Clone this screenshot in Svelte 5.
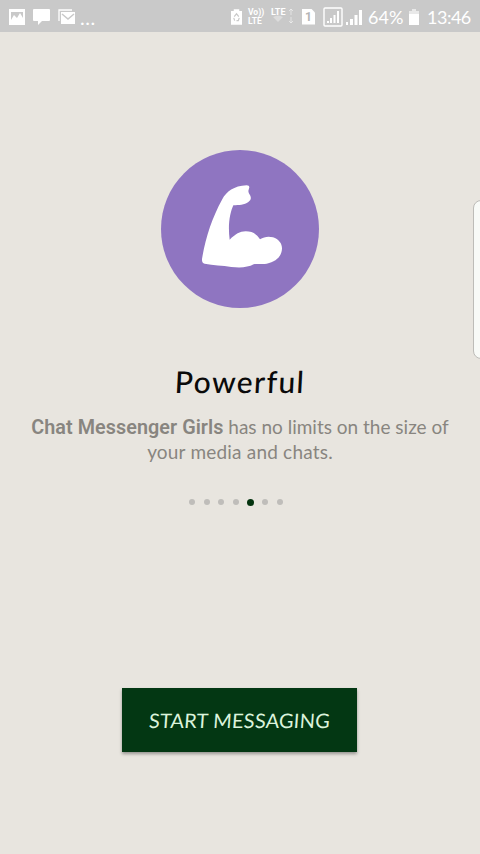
<script>
  const slides = 7;
  let current = 4;
</script>

<div class="screen">
  <header class="status">
    <div class="notifications">
      <svg width="16" height="16" viewBox="0 0 16 16">
        <path fill="#fff" fill-rule="evenodd" d="M0 0h16v16H0zM2 3v10h12V3zM2 11l3-5 3 3 3-5 3 5v4H2z" />
      </svg>
      <svg width="17" height="16" viewBox="0 0 17 16">
        <path fill="#fff" d="M1 0h15q1 0 1 1v10q0 1-1 1H9l-4 4v-4H1q-1 0-1-1V1q0-1 1-1z" />
      </svg>
      <svg width="17" height="16" viewBox="0 0 17 16">
        <path d="M1 12V1h13" fill="none" stroke="#fff" stroke-width="1.3" />
        <path fill="#fff" d="M3 3h14v12H3z" />
        <path d="M4 5l6 5 6-5" fill="none" stroke="#c9c9c9" stroke-width="1.5" />
      </svg>
      <span class="more">...</span>
    </div>

    <div class="system">
      <svg width="11" height="16" viewBox="0 0 12 17">
        <path fill="#fff" d="M3 0h6v2h3v15H0V2h3z" />
        <path d="M3.500 8L6 5l2.500 3M9 9.500l-1 3H6M3 9.500l1 3" fill="none" stroke="#c9c9c9" stroke-width="1.3" />
      </svg>
      <div class="volte"><span>Vo))</span><span>LTE</span></div>
      <div class="lte">
        <span>LTE</span>
        <svg width="25" height="16" viewBox="0 0 25 16">
          <path d="M2 9q5-3 10 0l-5 5z" fill="#fff" opacity=".35" />
          <path d="M20 1v6M18 3l2-2 2 2M20 9v6M18 13l2 2 2-2" fill="none" stroke="#fff" opacity=".5" />
        </svg>
      </div>
      <div class="sim">1</div>
      <svg class="boxed" width="20" height="20" viewBox="0 0 20 20">
        <rect x="1" y="1" width="18" height="18" rx="1" fill="none" stroke="#fff" stroke-width="1.4" />
        <path fill="#fff" d="M4 14h2v2H4zM7 11h2v5H7zM10.500 8h2v8h-2zM14 4h2v12h-2z" />
      </svg>
      <svg class="signal" width="17" height="16" viewBox="0 0 17 16">
        <path fill="#fff" d="M0 13h2v3H0zM4 10h3v6H4zM8.500 6h3v10h-3zM13 1h3v15h-3z" />
      </svg>
      <span class="percent">64%</span>
      <svg class="battery" width="10" height="16" viewBox="0 0 10 16">
        <path fill="#fff" opacity=".6" d="M3 0h4v2h3v4H0V2h3z" />
        <path fill="#fff" d="M0 5h10v11H0z" />
      </svg>
      <span class="time">13:46</span>
    </div>
  </header>

  <main>
    <svg class="picture" width="158" height="158" viewBox="33 31 474 474">
      <circle cx="270" cy="268" r="237" fill="#8f75c1" />
      <path
        fill="#fff"
        d="M290 137Q299 137 298 143L295 154Q295 161 301 168Q306 181 295 187C283 196 267 196 250 197C240 219 233 254 239 300C257 283 269 275 287 275C307 275 320 283 330 299C342 291 356 289 369 293C386 299 396 311 396 326C396 349 378 367 350 372C337 375 323 371 311 374C294 383 274 385 244 382C217 376 190 378 164 372Q155 370 156 358C166 296 186 235 216 180C230 155 251 139 290 137Z"
      />
    </svg>

    <h1>Powerful</h1>
    <p>
      <span class="line first"><b>Chat Messenger Girls</b> has no limits on the size of</span>
      <span class="line second">your media and chats.</span>
    </p>

    <div class="dots">
      {#each Array(slides) as _, i}
        <span class="dot" class:active={i === current}></span>
      {/each}
    </div>

    <button class="start"><span>START MESSAGING</span></button>
  </main>

  <div class="edge"></div>
</div>

<style>
  :global(body) {
    margin: 0;
    background: #e8e5df;
  }
  .screen {
    position: relative;
    width: 480px;
    height: 854px;
    overflow: hidden;
    background: #e8e5df;
    font-family: Lato, "Open Sans", sans-serif;
  }
  .status {
    box-sizing: border-box;
    height: 32px;
    padding: 0 10px 0 9px;
    display: flex;
    justify-content: space-between;
    background: #c9c9c9;
    color: #fff;
  }
  .notifications,
  .system {
    display: flex;
    align-items: center;
    height: 33px;
  }
  .notifications {
    gap: 8px;
  }
  .more {
    font-size: 20px;
    letter-spacing: 0.5px;
    line-height: 20px;
    margin-left: -3px;
  }
  .volte {
    display: flex;
    flex-direction: column;
    width: 17px;
    margin: 0 6px;
    font: bold 8.5px/9px Roboto, sans-serif;
  }
  .lte {
    display: flex;
    flex-direction: column;
    position: relative;
    width: 23px;
    height: 17px;
    margin-right: 8px;
    font: bold 9px/9px Roboto, sans-serif;
  }
  .lte svg {
    position: absolute;
    top: 0;
    left: 0;
  }
  .sim {
    width: 13px;
    height: 16px;
    margin-right: 8px;
    background: #fff;
    clip-path: polygon(0 0, 70% 0, 100% 25%, 100% 100%, 0 100%);
    color: #b5b5b5;
    font: bold 12px/16px Roboto, sans-serif;
    text-align: center;
  }
  .boxed {
    margin-right: 3px;
  }
  .percent,
  .time {
    font-size: 18px;
    line-height: 20px;
    white-space: nowrap;
  }
  .percent {
    width: 36px;
    margin-left: 5px;
  }
  .battery {
    margin: 0 8px 0 5px;
  }
  .time {
    width: 43px;
    letter-spacing: -0.5px;
  }
  main {
    display: flex;
    flex-direction: column;
    align-items: center;
  }
  .picture {
    margin-top: 118px;
  }
  h1 {
    margin: 54px 0 0;
    color: #0a0a0a;
    font-size: 30px;
    font-weight: 500;
    line-height: 38px;
    letter-spacing: 1.4px;
    transform: skewX(-3deg);
  }
  p {
    margin: 15px 0 0;
    color: #888580;
    font-size: 19px;
    line-height: 24px;
    text-align: center;
  }
  .line {
    display: block;
    white-space: nowrap;
  }
  .second {
    letter-spacing: 0.2px;
  }
  b {
    font-family: Roboto, sans-serif;
    font-size: 19.8px;
    font-weight: 600;
    letter-spacing: 0.05px;
  }
  .dots {
    display: flex;
    gap: 8.7px;
    margin: 35px 8px 0 0;
  }
  .dot {
    width: 6px;
    height: 6px;
    border-radius: 50%;
    background: #bfbdba;
  }
  .dot.active {
    width: 7px;
    height: 7px;
    margin: -0.5px;
    background: #04340f;
  }
  .start {
    width: 235px;
    height: 64px;
    margin: 183px 1px 0 0;
    padding: 0;
    border: 0;
    background: #033713;
    box-shadow: 0 2px 3px rgba(0, 0, 0, 0.35);
    color: #dcf3dc;
    font-family: inherit;
    font-size: 20px;
    letter-spacing: 0.2px;
    white-space: nowrap;
  }
  .start span {
    display: inline-block;
    transform: skewX(-4deg);
  }
  .edge {
    position: absolute;
    top: 200px;
    left: 473px;
    width: 20px;
    height: 157px;
    border: 1px solid #bdbcb8;
    border-radius: 8px;
    background: #f8faf7;
  }
</style>
